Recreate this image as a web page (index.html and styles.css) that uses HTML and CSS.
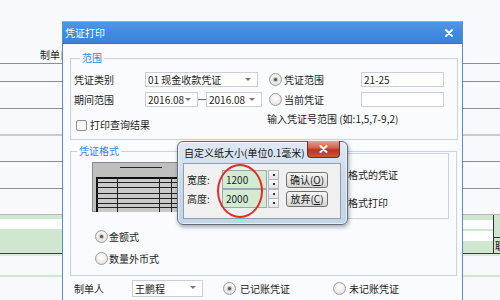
FILE: index.html
```html
<!DOCTYPE html>
<html lang="zh">
<head>
<meta charset="utf-8">
<title>凭证打印</title>
<link rel="stylesheet" href="styles.css">
</head>
<body>
<div class="bg">
  <div class="r r1"><span class="bglab">制单日</span></div>
  <div class="r r2"></div>
  <div class="r r3"></div>
  <div class="r r4"></div>
  <div class="r r5"></div>
  <div class="r r6"></div>
  <div class="r r7"></div>
  <div class="green">
    <div class="gl"><div class="wstripe"></div></div>
    <div></div>
    <div class="gr"><div class="wbox b1"></div><div class="wbox b2"></div></div>
    <div class="vline"></div>
    <div class="gcell"><div class="gtop"></div><span class="gtxt">职</span></div>
  </div>
  <div class="lg"></div>
  <div class="wband"></div>
  <div class="gline"></div>
</div>

<div class="dlg">
  <div class="dtitle">
    <span>凭证打印</span>
    <svg class="dclose" width="8" height="8" viewBox="0 0 8 8"><path d="M1 1L7 7M7 1L1 7" stroke="#fff" stroke-width="1.8" stroke-linecap="round"/></svg>
  </div>
  <div class="dbody">
    <fieldset class="fs fs1">
      <legend>范围</legend>
      <div class="g1">
        <div class="col">
          <div class="row"><span class="lab">凭证类别</span><div class="sel w113">01 现金收款凭证<i class="arr"></i></div></div>
          <div class="row"><span class="lab">期间范围</span><div class="sel w53">2016.08<i class="arr"></i></div><span class="dash"></span><div class="sel w56">2016.08<i class="arr"></i></div></div>
          <div class="chkrow"><span class="chk"></span><span class="ctext">打印查询结果</span></div>
        </div>
        <div class="col">
          <div class="row"><span class="ropt"><span class="rad on"></span><span class="rtext">凭证范围</span></span><div class="inp">21-25</div></div>
          <div class="row"><span class="ropt"><span class="rad"></span><span class="rtext">当前凭证</span></span><div class="inp"></div></div>
          <div class="hint">输入凭证号范围 (如:1,5,7-9,2)</div>
        </div>
      </div>
    </fieldset>

    <fieldset class="fs fs2">
      <legend>凭证格式</legend>
      <div class="ftop">
        <div class="preview">
          <svg width="94" height="50" viewBox="0 0 94 50">
            <rect x="0" y="0" width="94" height="50" fill="#bfbfbf"/>
            <rect x="0.5" y="0.5" width="93" height="49" fill="none" stroke="#8a8a8a"/>
            <line x1="28" y1="5.5" x2="70" y2="5.5" stroke="#222"/>
            <rect x="4" y="15" width="90" height="35" fill="#c9c9c9"/>
            <line x1="5" y1="15" x2="5" y2="50" stroke="#111" stroke-width="2"/>
            <line x1="4" y1="16" x2="94" y2="16" stroke="#111" stroke-width="2"/>
            <g stroke="#222" stroke-width="1">
              <line x1="4" y1="20.5" x2="94" y2="20.5"/>
              <line x1="4" y1="25.5" x2="94" y2="25.5"/>
              <line x1="4" y1="31.5" x2="94" y2="31.5"/>
              <line x1="4" y1="36.5" x2="94" y2="36.5"/>
              <line x1="4" y1="41.5" x2="94" y2="41.5"/>
              <line x1="4" y1="45.5" x2="94" y2="45.5"/>
              <line x1="25.5" y1="15" x2="25.5" y2="50"/>
              <line x1="67.5" y1="15" x2="67.5" y2="50"/>
              <line x1="79.5" y1="15" x2="79.5" y2="50"/>
            </g>
          </svg>
        </div>
        <div class="ibox">
          <div class="itext">格式的凭证</div>
          <div class="itext t2">格式打印</div>
        </div>
      </div>
      <div class="frads">
        <div class="frow"><span class="rad on"></span><span class="ftext">金额式</span></div>
        <div class="frow"><span class="rad"></span><span class="ftext">数量外币式</span></div>
      </div>
    </fieldset>

    <div class="brow">
      <span class="blab">制单人</span>
      <div class="sel w71">王鹏程<i class="arr"></i></div>
      <span class="rad on r1m"></span><span class="btext">已记账凭证</span>
      <span class="rad r2m"></span><span class="btext2">未记账凭证</span>
    </div>
  </div>
</div>

<div class="pop">
  <div class="ptitle">自定义纸大小(单位0.1毫米)</div>
  <div class="pclose"><svg width="9" height="8" viewBox="0 0 9 8"><path d="M1.5 1L7.5 7M7.5 1L1.5 7" stroke="#fff" stroke-width="2" stroke-linecap="round"/></svg></div>
  <div class="client">
    <div class="prow">
      <span class="plab">宽度:</span>
      <div class="pin">1200</div>
      <div class="spin"><span class="sp"><i class="dot"></i></span><span class="sp"><i class="dot"></i></span></div>
      <div class="pbtn">确认(<u>O</u>)</div>
    </div>
    <div class="prow">
      <span class="plab">高度:</span>
      <div class="pin">2000</div>
      <div class="spin"><span class="sp"><i class="dot"></i></span><span class="sp"><i class="dot"></i></span></div>
      <div class="pbtn">放弃(<u>C</u>)</div>
    </div>
  </div>
  <div class="ring"></div>
</div>
</body>
</html>
```

FILE: styles.css
```css
* { box-sizing: border-box; margin: 0; padding: 0; }
html, body { width: 500px; height: 300px; overflow: hidden; }
body {
  position: relative;
  background: #f8f9fd;
  font-family: "Noto Sans CJK SC", "Noto Sans", sans-serif;
  font-size: 10px;
  line-height: 12px;
  color: #1b1b1b;
}

/* background sheet */
.bg { width: 500px; }
.r { border-bottom: 1px solid #8d8d8d; }
.r1 { height: 64px; display: flex; align-items: flex-end; padding: 0 0 2px 40px; }
.r2 { height: 18px; }
.r3 { height: 27px; }
.r4 { height: 27px; border-bottom: 2px solid #cacaca; }
.r5 { height: 26px; }
.r6 { height: 27px; }
.r7 { height: 26px; border-bottom: 1px solid #b7b7b7; }
.bglab { color: #222; }
.green {
  height: 39px;
  background: #cfe7cf;
  border-bottom: 1px solid #3c3c3c;
  display: grid;
  grid-template-columns: 62px 401px 30px 1px 6px;
}
.wstripe { margin-top: 4px; height: 10px; background: #fff; }
.gr { display: flex; flex-direction: column; }
.wbox { background: #fff; height: 9px; }
.b1 { margin-top: 5px; }
.b2 { margin-top: 2px; height: 10px; }
.vline { background: #333; }
.gcell { overflow: hidden; }
.gtop { height: 23px; border-bottom: 1px solid #333; }
.gtxt { display: block; margin: 2px 0 0 1px; }
.lg { height: 2px; background: #d9eed9; }
.wband { height: 19px; }
.gline { height: 2px; background: #cfe7cf; }

/* main dialog */
.dlg {
  position: absolute;
  left: 62px; top: 21px;
  width: 401px; height: 279px;
  border-top: 1px solid #aaaaaa;
  border-left: 1px solid #4f8fdd;
  border-right: 1px solid #4f8fdd;
  background: #fafbfe;
}
.dtitle {
  height: 22px;
  background: linear-gradient(#5296e4, #428ae0 50%, #3b81d9);
  border-bottom: 1px solid #3070c8;
  color: #fff;
  display: flex;
  align-items: center;
  justify-content: space-between;
  padding: 0 9px 0 2px;
}
.dclose { display: block; }
.dbody { padding-left: 7px; }

.fs {
  border: 1px solid #c6d3e4;
  width: 388px;
}
.fs legend {
  margin-left: 6px;
  padding: 0 2px;
  color: #3d7fd6;
  line-height: 12px;
  font-size: 10px;
}
.fs1 { margin-top: 8px; height: 88px; padding: 8px 0 0 3px; }
.g1 { display: grid; grid-template-columns: 193px 1fr; }
.col { display: flex; flex-direction: column; }
.row { display: flex; align-items: center; height: 15px; }
.row + .row { margin-top: 5px; }
.lab { width: 71px; }
.sel {
  position: relative;
  height: 15px;
  border: 1px solid #c9ced8;
  background: #fff;
  display: flex;
  align-items: center;
  padding-left: 2px;
  white-space: nowrap;
}
.arr {
  position: absolute;
  right: 6px; top: 5px;
  border-left: 3px solid transparent;
  border-right: 3px solid transparent;
  border-top: 3px solid #7a7a7a;
}
.w113 { width: 113px; }
.w53 { width: 53px; }
.w56 { width: 56px; }
.w71 { width: 71px; height: 17px; }
.dash { width: 8px; height: 1px; background: #666; }
.chkrow { display: flex; align-items: center; margin-top: 12px; height: 12px; }
.chk {
  width: 11px; height: 11px; margin-left: 2px;
  border: 1px solid #8e8f8f; border-radius: 2px;
  background: linear-gradient(#f0f0f0, #fff);
}
.ctext { margin-left: 3px; }
.ropt { width: 94px; display: flex; align-items: center; }
.rad {
  position: relative;
  flex: none;
  width: 13px; height: 13px;
  border-radius: 50%;
  border: 1px solid #9a9a9a;
  background: radial-gradient(circle at 50% 40%, #ffffff 0, #f1f1f1 45%, #d4d4d4 100%);
}
.rad.on::after {
  content: "";
  position: absolute;
  left: 4px; top: 4px;
  width: 3px; height: 3px;
  border-radius: 50%;
  background: #555;
  box-shadow: 0 0 1px 1px rgba(120,120,120,0.5);
}
.ropt .rad { margin-left: 2px; }
.rtext { margin-left: 2px; }
.inp {
  width: 83px; height: 15px;
  border: 1px solid #c9ced8;
  background: #fff;
  padding-left: 2px;
  display: flex; align-items: center;
}
.hint { margin-top: 6px; white-space: nowrap; }

.fs2 { margin-top: 5px; height: 131px; width: 387px; padding: 0; }
.ftop { display: flex; align-items: flex-start; }
.preview { margin: 5px 0 0 21px; width: 94px; height: 50px; }
.preview svg { display: block; }
.ibox {
  margin: -4px 0 0 9px;
  width: 254px; height: 66px;
  border: 1px solid #c6d3e4;
  padding: 15px 0 0 152px;
}
.itext { white-space: nowrap; }
.itext.t2 { margin-top: 16px; }
.frads { margin: 11px 0 0 24px; }
.frow { display: flex; align-items: center; height: 13px; }
.frow + .frow { margin-top: 9px; }
.ftext { margin-left: 1px; }

.brow { display: flex; align-items: center; height: 17px; margin-top: 4px; padding-left: 4px; }
.blab { width: 58px; }
.r1m { margin-left: 20px; }
.btext { margin-left: 4px; }
.r2m { margin-left: 43px; }
.btext2 { margin-left: 3px; }

/* custom paper popup */
.pop {
  position: absolute;
  left: 177px; top: 141px;
  width: 171px; height: 84px;
  border: 1px solid #5e6e82;
  border-radius: 6px;
  background: linear-gradient(#dfe9f5, #cddcec 40%, #c3d4e7);
  box-shadow: 1px 2px 4px rgba(0,0,0,0.35), inset 0 0 0 1px rgba(255,255,255,0.6);
  padding: 0 6px 5px 5px;
  display: flex;
  flex-direction: column;
}
.ptitle { height: 21px; display: flex; align-items: center; padding-left: 1px; white-space: nowrap; color: #111; }
.pclose {
  position: absolute;
  right: 7px; top: -1px;
  width: 33px; height: 17px;
  border: 1px solid #6d2a21;
  border-top: none;
  border-radius: 0 0 4px 4px;
  background: linear-gradient(#e4a090, #d0604c 45%, #b9341f 55%, #c85a3e);
  display: flex; align-items: center; justify-content: center;
}
.pclose svg { display: block; }
.client {
  flex: 1;
  background: #f0f0f0;
  border: 1px solid #8d9db2;
  padding: 6px 0 0 3px;
}
.prow { display: flex; align-items: center; height: 19px; }
.plab { width: 35px; }
.pin {
  width: 45px; height: 19px;
  border: 1px solid #9ba7b3;
  background: #d3ebd2;
  padding-left: 3px;
  display: flex; align-items: center;
}
.spin { width: 11px; height: 19px; margin-left: 1px; display: flex; flex-direction: column; }
.sp {
  flex: 1;
  border: 1px solid #b4b9c0;
  background: linear-gradient(#fafafa, #e4e4e4);
  display: flex; align-items: center; justify-content: center;
}
.sp + .sp { border-top: none; }
.dot { width: 2px; height: 2px; background: #333; }
.pbtn {
  margin-left: 7px;
  width: 42px; height: 16px;
  border: 1px solid #707070;
  border-radius: 3px;
  background: linear-gradient(#f6f6f6, #e6e6e6 50%, #d4d4d4);
  display: flex; align-items: center; justify-content: center;
  white-space: nowrap;
}
.ring {
  position: absolute;
  left: 39px; top: 22px;
  width: 46px; height: 54px;
  border: 2px solid #e42a2a;
  border-radius: 50%;
}
```
